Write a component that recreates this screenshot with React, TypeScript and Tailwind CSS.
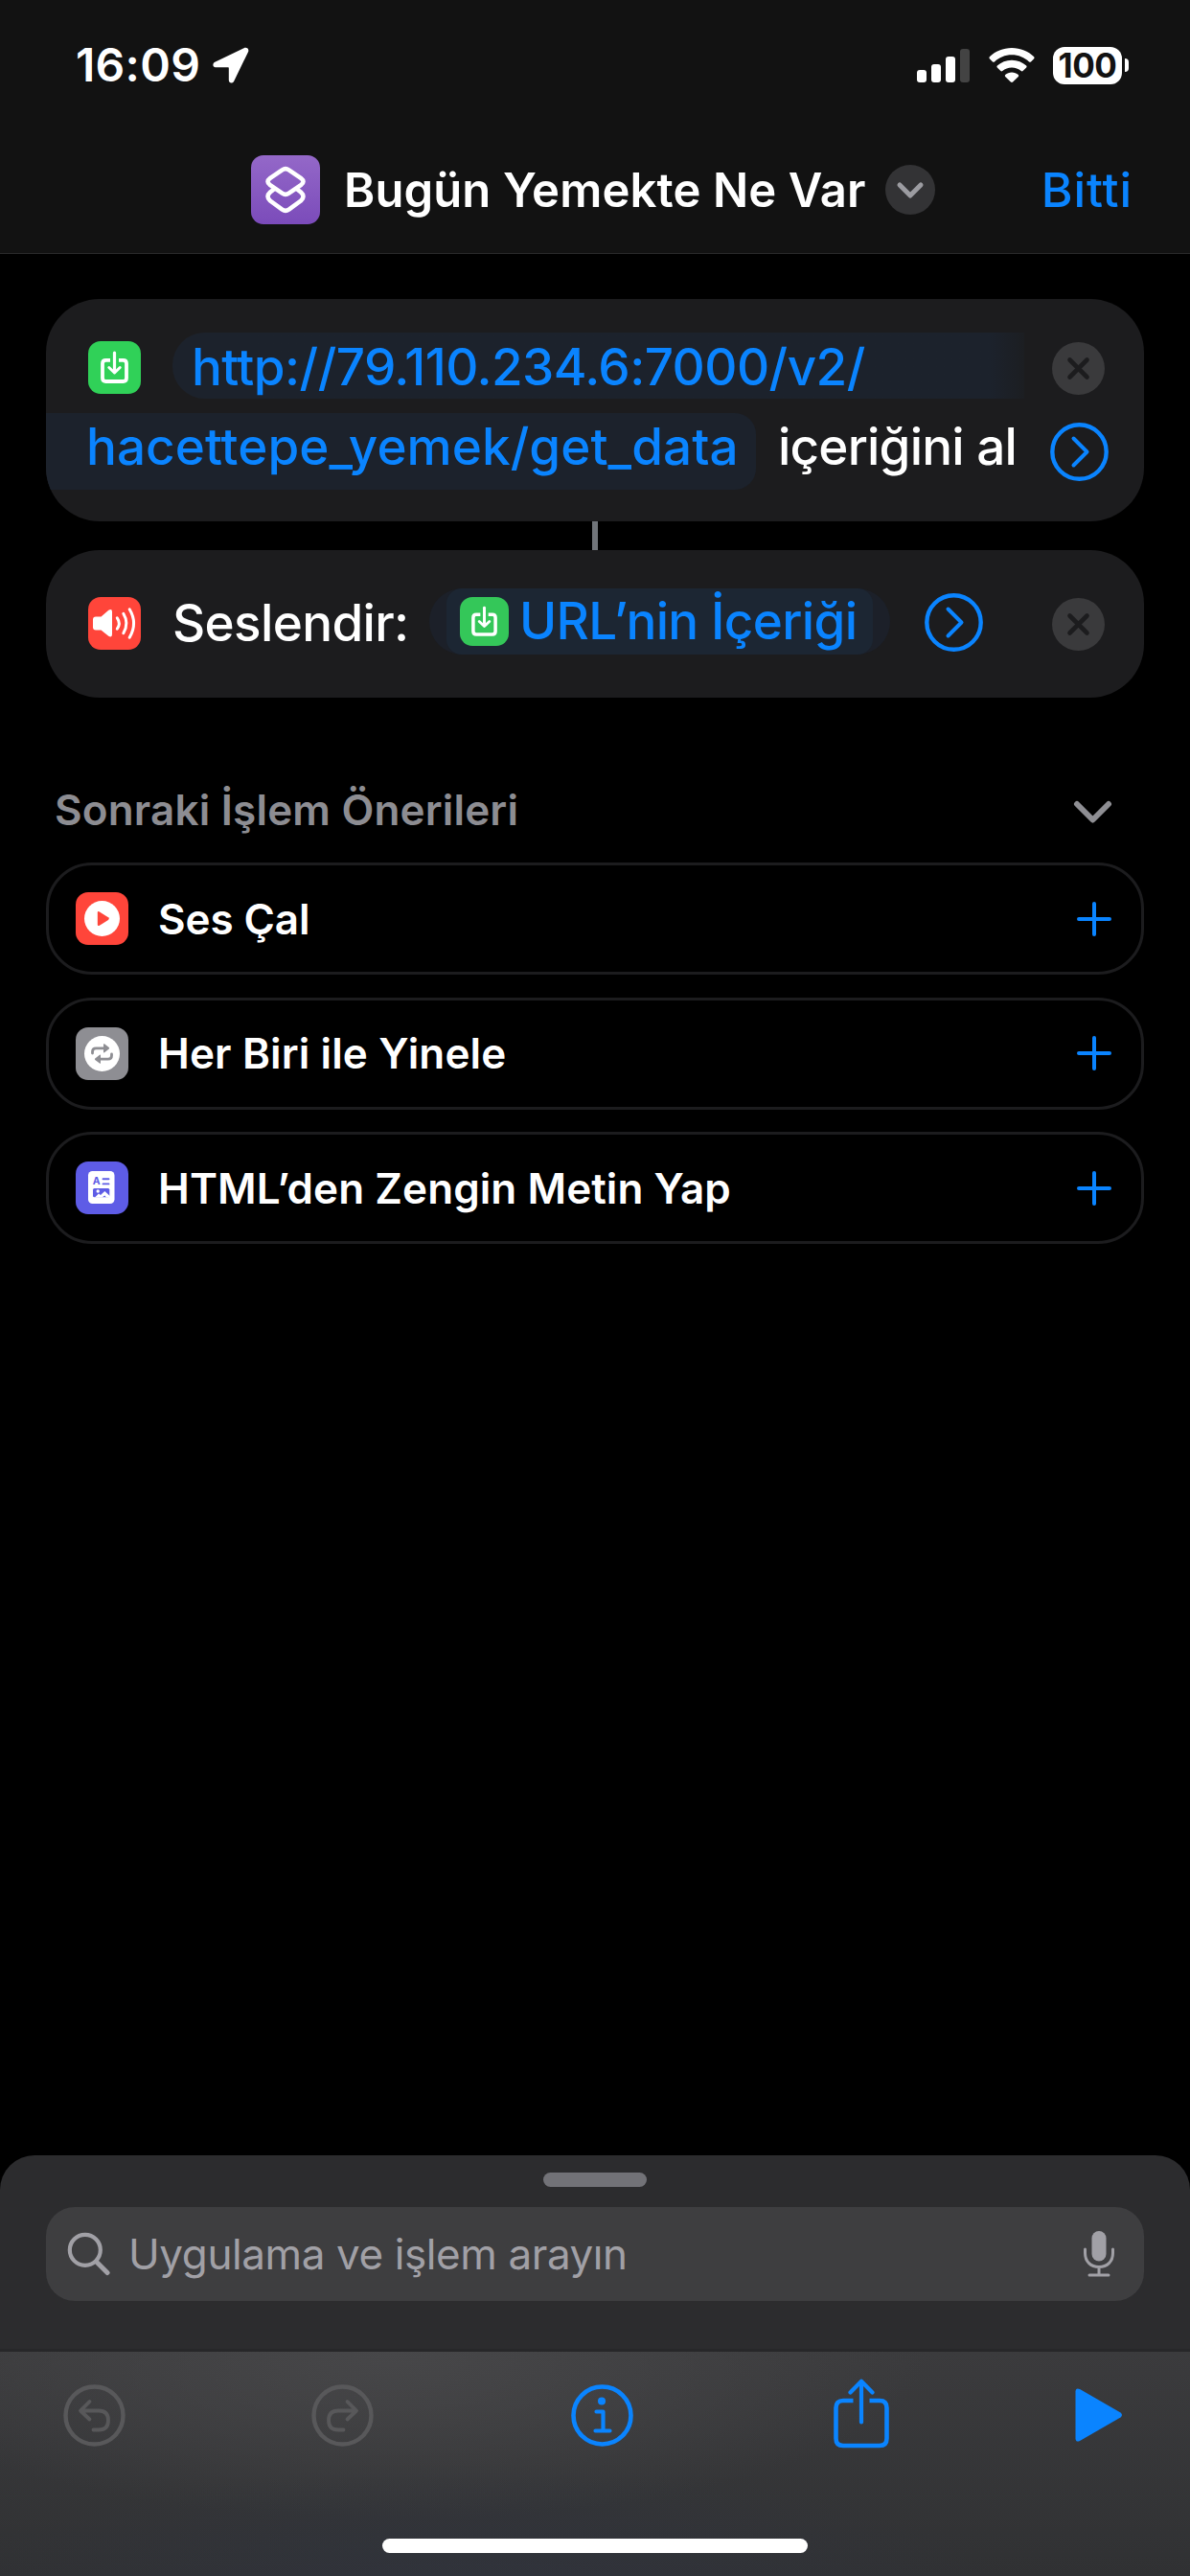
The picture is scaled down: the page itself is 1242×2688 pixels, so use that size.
import type { ReactNode } from "react";

const BLUE = "#0a84ff";

function StatusBar() {
  return (
    <div className="flex h-[136px] items-center pl-[79px] pr-[64px] text-white">
      <span className="text-[48px] leading-none font-semibold tracking-[0.3px]">16:09</span>
      <svg className="ml-[13px]" width="38" height="38" viewBox="0 0 38 38" fill="#fff">
        <path d="M32.500 1.200 2.300 15.800C-.6 17.300-.1 21.300 3 21.300H16.200Q16.800 21.300 16.800 22V34.500C16.800 38 20.900 38.500 22.300 35.400L37 5.200C38.400 2.200 35.600-.3 32.500 1.200Z" />
      </svg>
      <div className="ml-auto flex h-[35px] items-end gap-[5px]">
        <span className="h-[13px] w-[10px] rounded-[3px] bg-white" />
        <span className="h-[19px] w-[10px] rounded-[3px] bg-white" />
        <span className="h-[27px] w-[10px] rounded-[3px] bg-white" />
        <span className="h-[35px] w-[10px] rounded-[3px] bg-[#434343]" />
      </div>
      <svg className="ml-[20px]" width="48" height="37" viewBox="0 0 48 37" fill="#fff">
        <path d="M24 0C33 0 41.200 3.500 47.200 9.200Q48 10.200 47.200 11.200L44 14.400Q43 15.300 42 14.400C37.300 10 31 7.300 24 7.300S10.700 10 6 14.400Q5 15.300 4 14.400L.8 11.200Q0 10.200 .8 9.200C6.800 3.500 15 0 24 0Z" />
        <path d="M24 12.700C29.900 12.700 35.200 14.900 39.200 18.600Q40.100 19.600 39.200 20.600L35.600 24.100Q34.700 25 33.700 24.100C31.100 21.900 27.700 20.500 24 20.500S16.900 21.900 14.300 24.100Q13.300 25 12.400 24.100L8.800 20.600Q7.900 19.600 8.800 18.600C12.800 14.900 18.100 12.700 24 12.700Z" />
        <path d="M24 25.500C26.600 25.500 29 26.400 30.800 27.900Q31.700 28.900 30.800 29.900L25.100 35.600Q24 36.500 22.900 35.600L17.200 29.900Q16.300 28.900 17.200 27.900C19 26.400 21.400 25.500 24 25.500Z" />
      </svg>
      <div className="ml-[19px] flex h-[39px] w-[72px] items-center justify-center rounded-[12px] bg-white text-[35px] leading-none font-bold tracking-[-0.5px] text-[#121212]">
        100
      </div>
      <span className="ml-[3px] h-[14px] w-[4px] rounded-r-full bg-white" />
    </div>
  );
}

function TitleBar() {
  return (
    <div className="flex h-[128px] items-center pl-[262px] pr-[60px] pb-[4px]">
      <div className="flex size-[72px] items-center justify-center rounded-[13px] bg-linear-to-b from-[#9468c8] to-[#7b4bba]">
        <svg width="72" height="72" viewBox="0 0 72 72" fill="none" stroke="#fff" strokeWidth="4.600" strokeLinejoin="round">
          <path d="M32.500 15.300Q36 13 39.500 15.300L52 23.800Q57 27.500 52 31.200L39.500 39.700Q36 42 32.500 39.700L20 31.200Q15 27.500 20 23.800Z" />
          <path d="M24.500 35 20 38.500Q15 43 20 47.500L32.500 56.700Q36 59 39.500 56.700L52 47.500Q57 43 52 38.500L47.500 35" />
        </svg>
      </div>
      <h1 className="ml-[25px] text-[49px] leading-none font-semibold tracking-[0.1px] whitespace-nowrap text-white">
        Bugün Yemekte Ne Var
      </h1>
      <div className="ml-[20px] flex size-[52px] items-center justify-center rounded-full bg-[#333335]">
        <svg width="30" height="20" viewBox="0 0 30 20" fill="none" stroke="#9c9ca1" strokeWidth="5" strokeLinecap="round" strokeLinejoin="round">
          <path d="M4 5 15 16 26 5" />
        </svg>
      </div>
      <span className="ml-auto text-[50px] leading-none font-medium tracking-[0.9px] text-[#0a84ff]">Bitti</span>
    </div>
  );
}

function Tile({ className, children }: { className: string; children: ReactNode }) {
  return (
    <div className={`shrink-0 overflow-hidden rounded-[13px] ${className}`}>
      <svg className="size-full" viewBox="0 0 55 55" fill="none">
        {children}
      </svg>
    </div>
  );
}

function DownloadGlyph() {
  return (
    <g stroke="#fff" strokeWidth="3.800" strokeLinejoin="round">
      <path d="M23 19.800H18.500Q15 19.800 15 23.300V38.500Q15 42 18.500 42H36.500Q40 42 40 38.500V23.300Q40 19.800 36.500 19.800H32" />
      <path d="M27.500 12V32" strokeLinecap="round" strokeWidth="3.200" />
      <path d="M21.800 27.500 27.500 33 33.200 27.500" strokeLinecap="round" strokeWidth="3" />
    </g>
  );
}

function RemoveButton() {
  return (
    <svg width="55" height="55" viewBox="0 0 55 55">
      <circle cx="27.500" cy="27.500" r="27.500" fill="#3a3a3c" />
      <path d="M18.500 18.500 36.500 36.500M36.500 18.500 18.500 36.500" stroke="#1c1c1e" strokeWidth="4.600" strokeLinecap="round" />
    </svg>
  );
}

function DetailButton() {
  return (
    <svg width="61" height="61" viewBox="0 0 61 61" fill="none" stroke={BLUE} strokeLinecap="round" strokeLinejoin="round">
      <circle cx="30.500" cy="30.500" r="28.200" strokeWidth="4.400" />
      <path d="M24.500 16.500 38.500 30.500 24.500 44.500" strokeWidth="4" />
    </svg>
  );
}

function UrlCard() {
  return (
    <section className="h-[232px] overflow-hidden rounded-[56px] bg-[#1c1c1e] pt-[35px]">
      <div className="flex h-[69px] items-center pl-[44px] pr-[41px]">
        <Tile className="mt-[4px] size-[55px] bg-[#30d158]">
          <DownloadGlyph />
        </Tile>
        <div className="ml-[33px] flex h-[69px] w-[889px] items-center rounded-l-[34px] bg-linear-to-r from-[#1c222c] from-96% to-[#1c1e22] to-100% pl-[20px] text-[53px] leading-[69px] font-medium tracking-[-0.54px] whitespace-nowrap text-[#0a84ff]">
          <span className="pt-[3px]">http://79.110.234.6:7000/v2/</span>
        </div>
        <div className="ml-auto mt-[5px]">
          <RemoveButton />
        </div>
      </div>
      <div className="mt-[15px] flex h-[80px] items-center pr-[37px] text-[53px] leading-[70px] font-medium whitespace-nowrap">
        <div className="h-[80px] w-[741px] rounded-r-[22px] bg-[#1c222c] pl-[42px] tracking-[0.07px] text-[#0a84ff]">
          hacettepe_yemek/get_data
        </div>
        <span className="ml-[23px] h-[80px] tracking-[-0.8px] text-white">içeriğini al</span>
        <div className="ml-auto">
          <DetailButton />
        </div>
      </div>
    </section>
  );
}

function SpeakCard() {
  return (
    <section className="flex h-[154px] items-center rounded-[56px] bg-[#1c1c1e] pl-[44px] pr-[41px] text-[53px] leading-[69px] font-medium whitespace-nowrap">
      <Tile className="mb-[1px] size-[55px] bg-[#ff453a]">
        <path
          d="M8 20.500H13.500L21.300 13.800Q25 11.800 25 15.500V39Q25 42.800 21.300 40.700L13.500 34.500H8Q5 34.500 5 31.500V23.500Q5 20.500 8 20.500Z"
          fill="#fff"
        />
        <path
          d="M30.300 21.800Q34.300 27.500 30.300 33.200M36.800 17.300Q43 27.500 36.800 37.700M43.200 12.800Q52 27.500 43.200 42.200"
          stroke="#fff"
          strokeWidth="3"
          strokeLinecap="round"
        />
      </Tile>
      <span className="mb-[2px] ml-[33px] w-[246px] tracking-[-0.65px] text-white">Seslendir:</span>
      <div className="ml-[22px] mb-[5px] flex h-[69px] w-[481px] shrink-0 items-center rounded-full bg-[#1c2029] px-[18px]">
        <div className="flex h-[69px] w-[445px] items-center rounded-[16px] bg-[#1c2633] pl-[14px]">
          <Tile className="size-[51px] bg-[#34c759]">
            <DownloadGlyph />
          </Tile>
          <span className="ml-[11px] tracking-[-0.65px] text-[#0a84ff]">URL’nin İçeriği</span>
        </div>
      </div>
      <div className="ml-[36px] mb-[3px]">
        <DetailButton />
      </div>
      <div className="ml-auto">
        <RemoveButton />
      </div>
    </section>
  );
}

function Suggestion({ tile, label, className }: { tile: ReactNode; label: string; className: string }) {
  return (
    <div className="flex h-[117px] items-center rounded-[48px] border-[3px] border-[#1c1c1e] pl-[28px] pr-[31px]">
      {tile}
      <span className={`ml-[31px] text-[44px] leading-none font-semibold whitespace-nowrap text-white ${className}`}>
        {label}
      </span>
      <svg className="ml-auto" width="36" height="36" viewBox="0 0 36 36" stroke={BLUE} strokeWidth="4" strokeLinecap="round">
        <path d="M18 2V34M2 18H34" />
      </svg>
    </div>
  );
}

function Suggestions() {
  return (
    <section className="mt-[86px]">
      <div className="flex h-[62px] items-center justify-between pl-[9px] pr-[33px]">
        <h2 className="text-[44px] leading-none font-semibold tracking-[0.18px] text-[#8d8d92]">Sonraki İşlem Önerileri</h2>
        <svg className="mt-[5px]" width="41" height="26" viewBox="0 0 41 26" fill="none" stroke="#8e8e93" strokeWidth="6" strokeLinecap="round" strokeLinejoin="round">
          <path d="M4 4 20.500 20.500 37 4" />
        </svg>
      </div>
      <div className="mt-[24px] flex flex-col gap-[23.500px]">
        <Suggestion
          label="Ses Çal"
          className="tracking-[-0.1px]"
          tile={
            <Tile className="size-[55px] bg-[#ff453a]">
              <circle cx="27.500" cy="27.500" r="18.500" fill="#fff" />
              <path d="M22.800 21.500V33.500Q22.800 35.700 24.800 34.700L34 28.900Q35.800 27.600 34 26.200L24.800 20.400Q22.800 19.400 22.800 21.500Z" fill="#ff453a" />
            </Tile>
          }
        />
        <Suggestion
          label="Her Biri ile Yinele"
          className="tracking-[0.13px]"
          tile={
            <Tile className="size-[55px] bg-[#8e8e93]">
              <circle cx="27.500" cy="27.500" r="18.500" fill="#fff" />
              <g stroke="#8e8e93" strokeWidth="2.800" strokeLinecap="round" fill="none">
                <path d="M17.500 27V25.500Q17.500 21.800 21.200 21.800H30" />
                <path d="M37.500 28V29.500Q37.500 33.200 33.800 33.200H25" />
              </g>
              <path d="M29 17.800V25.800Q29 26.800 30 26.200L34.800 22.600Q35.500 21.800 34.800 21L30 17.300Q29 16.800 29 17.800ZM26 29.200V37.200Q26 38.200 25 37.600L20.200 34Q19.500 33.200 20.200 32.400L25 28.700Q26 28.200 26 29.200Z" fill="#8e8e93" />
            </Tile>
          }
        />
        <Suggestion
          label="HTML’den Zengin Metin Yap"
          className="tracking-[0.07px]"
          tile={
            <Tile className="size-[55px] bg-[#5e5ce6]">
              <rect x="13" y="10" width="27.500" height="34" rx="4.500" fill="#fff" />
              <text x="17.800" y="24.400" fontSize="10.500" fontWeight="700" fill="#5e5ce6">A</text>
              <path d="M28.500 18.200H34.500M28.500 23.400H34.500" stroke="#5e5ce6" strokeWidth="1.900" strokeLinecap="round" />
              <rect x="18" y="28" width="17.300" height="9.300" rx="1.500" fill="#5e5ce6" />
              <path d="M20 37.500 24 33.500 26 35 30.300 31 35.500 35.800V37.500H32L30.300 35.500 27.500 37.500Z" fill="#fff" />
              <circle cx="23.200" cy="31" r="1.700" fill="#fff" />
            </Tile>
          }
        />
      </div>
    </section>
  );
}

function SearchSheet() {
  return (
    <div className="flex h-[205px] flex-col items-center rounded-t-[36px] border-b-[3px] border-[#272729] bg-[#2c2c2e] px-[48px] pt-[18px]">
      <div className="h-[15px] w-[108px] shrink-0 rounded-full bg-[#727277]" />
      <div className="mt-[21px] flex h-[98px] w-full shrink-0 items-center rounded-[30px] bg-[#3e3e40] pl-[22px] pr-[30px]">
        <svg width="46" height="46" viewBox="0 0 46 46" fill="none" stroke="#a1a0a6" strokeLinecap="round">
          <circle cx="18.800" cy="18.800" r="16" strokeWidth="4.200" />
          <path d="M30.500 31 42 42.500" strokeWidth="5" />
        </svg>
        <span className="ml-[18px] text-[44px] leading-none tracking-[-0.4px] text-[#a1a0a6]">Uygulama ve işlem arayın</span>
        <svg className="ml-auto" width="34" height="48" viewBox="0 0 34 48" fill="none" stroke="#a1a0a6" strokeWidth="3" strokeLinecap="round">
          <rect x="9.500" y="0" width="15" height="31.500" rx="7.500" fill="#a1a0a6" stroke="none" />
          <path d="M2.500 19V23C2.500 32 8.500 37.500 17 37.500S31.500 32 31.500 23V19M17 38V45.500M7 46H27" />
        </svg>
      </div>
    </div>
  );
}

function Toolbar() {
  return (
    <div className="flex h-[234px] flex-col bg-[radial-gradient(ellipse_45%_60%_at_40%_110%,#30343fcc,#30343f00),radial-gradient(ellipse_45%_75%_at_33%_0%,#474749,#47474900),linear-gradient(to_bottom,#3b3b3d,#303133)]">
      <div className="mt-[25px] flex h-[82px] items-center pl-[66px]">
        <svg width="65" height="65" viewBox="0 0 65 65" fill="none" stroke="#58585a" strokeWidth="4.400" strokeLinecap="round" strokeLinejoin="round">
          <circle cx="32.500" cy="32.500" r="30" />
          <path d="M27.500 18 18 27.500 27.500 36.500M19 27.500H37Q47 27.500 47 37.500 47 47.500 37 47.500H31.500" strokeWidth="3.800" />
        </svg>
        <svg className="ml-[194px]" width="65" height="65" viewBox="0 0 65 65" fill="none" stroke="#58585a" strokeWidth="4.400" strokeLinecap="round" strokeLinejoin="round">
          <circle cx="32.500" cy="32.500" r="30" />
          <path d="M37.500 18 47 27.500 37.500 36.500M46 27.500H28Q18 27.500 18 37.500 18 47.500 28 47.500H33.500" strokeWidth="3.800" />
        </svg>
        <svg className="ml-[206px]" width="65" height="65" viewBox="0 0 65 65" fill="none" stroke={BLUE} strokeWidth="4.600" strokeLinecap="round" strokeLinejoin="round">
          <circle cx="32.500" cy="32.500" r="30" />
          <circle cx="32" cy="17.500" r="4" fill={BLUE} stroke="none" />
          <path d="M26.500 28.500H33.500V48.500M25.500 48.500H40.500" strokeWidth="4.200" />
        </svg>
        <svg className="ml-[209px] mb-[4px]" width="58" height="73" viewBox="0 0 58 73" fill="none" stroke={BLUE} strokeWidth="4.600" strokeLinecap="round" strokeLinejoin="round">
          <path d="M20.500 23H10Q2.500 23 2.500 30.500V62.500Q2.500 70 10 70H48Q55.500 70 55.500 62.500V30.500Q55.500 23 48 23H37.500" strokeLinecap="butt" />
          <path d="M29 3V45.500M17.500 14.500 29 2.800 40.500 14.500" strokeWidth="4.200" />
        </svg>
        <svg className="ml-[194px]" width="50" height="56" viewBox="0 0 50 56" fill={BLUE}>
          <path d="M.5 3.500V52.500Q.8 57 5 55L47.500 30.600Q50.500 28 47.500 25.400L5 1Q.8-1 .5 3.500Z" />
        </svg>
      </div>
      <div className="mx-auto mt-[88px] h-[15px] w-[444px] rounded-full bg-white" />
    </div>
  );
}

export default function App() {
  return (
    <div className="flex h-[2688px] w-[1242px] flex-col overflow-hidden bg-black font-['Inter','Liberation_Sans',sans-serif]">
      <header className="h-[265px] shrink-0 border-b border-[#2a2a2b] bg-[#121212]">
        <StatusBar />
        <TitleBar />
      </header>
      <main className="flex-1 px-[48px] pt-[47px]">
        <UrlCard />
        <div className="mx-auto h-[30px] w-[6px] bg-[#71757a]" />
        <SpeakCard />
        <Suggestions />
      </main>
      <SearchSheet />
      <Toolbar />
    </div>
  );
}
